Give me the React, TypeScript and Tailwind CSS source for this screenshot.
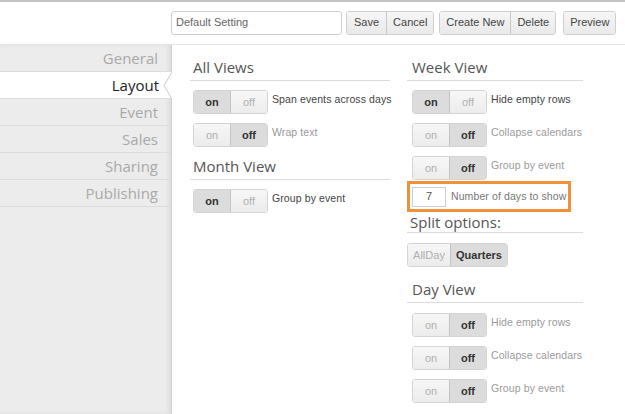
import React from 'react';

const font = { fontFamily: '"Open Sans", "Liberation Sans", sans-serif' };
const small = '[font-family:"Liberation_Sans",Arial,sans-serif] whitespace-nowrap';

const tabs = ['General', 'Layout', 'Event', 'Sales', 'Sharing', 'Publishing'];

function Toggle({ on, label }: { on: boolean; label: string }) {
  const seg = 'flex-1 flex items-center justify-center';
  return (
    <div className="flex items-center h-6 mb-[9px]">
      <div className={`flex shrink-0 w-[75px] h-6 rounded-[3px] border border-[#d4d4d4] overflow-hidden text-[11px] ${small}`}>
        <span className={`${seg} border-r border-[#c4c4c4] ${on ? 'bg-[#dcdcdc] font-bold text-[#333]' : 'bg-gradient-to-b from-[#f7f7f7] to-[#ececec] text-[#b0b0b0]'}`}>
          on
        </span>
        <span className={`${seg} ${!on ? 'bg-[#dcdcdc] font-bold text-[#333]' : 'bg-gradient-to-b from-[#f7f7f7] to-[#ececec] text-[#b0b0b0]'}`}>
          off
        </span>
      </div>
      <span className={`ml-[4px] -mt-[5px] text-[10.5px] tracking-[0.1px] ${small} ${on ? 'text-[#444]' : 'text-[#9a9a9a]'}`}>{label}</span>
    </div>
  );
}

function Heading({ children, className = '' }: { children: React.ReactNode; className?: string }) {
  return (
    <div className={`h-6 border-b border-[#dcdcdc] text-[15px] leading-[20px] text-[#555] pl-[3px] whitespace-nowrap ${className}`}>{children}</div>
  );
}

function Btn({ children, className = '' }: { children: React.ReactNode; className?: string }) {
  return (
    <span className={`h-full flex items-center px-[6px] bg-gradient-to-b from-[#f6f6f6] to-[#e9e9e9] text-[11px] text-[#444] ${small} ${className}`}>
      {children}
    </span>
  );
}

export default function App() {
  return (
    <div className="w-[625px] h-[414px] bg-white overflow-hidden flex flex-col" style={font}>
      <div className="h-[45px] shrink-0 border-t-2 border-[#c4c4c4] border-b border-b-[#e4e4e4] flex items-center pl-[171px] pb-[1px]">
        <div className={`w-[171px] h-6 border border-[#cfcfcf] rounded-[3px] flex items-center pl-[4px] text-[11px] text-[#666] ${small}`}>
          Default Setting
        </div>
        <div className="ml-[4px] h-6 flex border border-[#cfcfcf] rounded-[3px] overflow-hidden">
          <Btn className="border-r border-[#c8c8c8] px-[7px]">Save</Btn>
          <Btn>Cancel</Btn>
        </div>
        <div className="ml-[5px] h-6 flex border border-[#cfcfcf] rounded-[3px] overflow-hidden">
          <Btn className="border-r border-[#c8c8c8]">Create New</Btn>
          <Btn>Delete</Btn>
        </div>
        <div className="ml-[7px] h-6 flex border border-[#cfcfcf] rounded-[3px] overflow-hidden">
          <Btn>Preview</Btn>
        </div>
      </div>

      <div className="flex flex-1">
        <div className="w-[172px] shrink-0 bg-[#ececec] border-r border-[#cfcfcf] shadow-[inset_-3px_0_4px_rgba(0,0,0,0.06)]">
          {tabs.map((t) => {
            const active = t === 'Layout';
            return (
              <div
                key={t}
                className={`relative h-[27px] flex items-center justify-end pr-[13px] text-[15px] border-b border-[#dcdcdc] ${
                  active ? 'bg-white text-[#222] -mr-px' : 'text-[#a9a9a9]'
                }`}
              >
                {t}
                {active && (
                  <svg className="absolute right-0 top-0" width="9" height="27" viewBox="0 0 9 27">
                    <polyline points="9,0 1,13.5 9,27" fill="none" stroke="#c8c8c8" strokeWidth="1" />
                  </svg>
                )}
              </div>
            );
          })}
        </div>

        <div className="flex pl-[18px] pt-[12px]">
          <div className="w-[200px]">
            <Heading>All Views</Heading>
            <div className="pl-[3px] pt-[9px]">
              <Toggle on label="Span events across days" />
              <Toggle on={false} label="Wrap text" />
            </div>
            <Heading className="mt-[2px]">Month View</Heading>
            <div className="pl-[3px] pt-[9px]">
              <Toggle on label="Group by event" />
            </div>
          </div>

          <div className="w-[176px] ml-[17px]">
            <Heading className="pl-[5px]">Week View</Heading>
            <div className="pl-[5px] pt-[9px]">
              <Toggle on label="Hide empty rows" />
              <Toggle on={false} label="Collapse calendars" />
              <Toggle on={false} label="Group by event" />
            </div>
            <div className="w-[164px] h-[31px] -mt-[8px] border-[3px] border-[#f0913a] flex items-center pl-[2px]">
              <div className={`w-[34px] h-[20px] border border-[#cfcfcf] flex items-center justify-center text-[11px] text-[#555] ${small}`}>7</div>
              <span className={`ml-[5px] text-[10.5px] tracking-[0.1px] text-[#777] ${small}`}>Number of days to show</span>
            </div>
            <Heading className="h-[21px] leading-[16px] pl-[2px]">Split options:</Heading>
            <div className={`mt-[10px] w-[101px] h-6 flex border border-[#d4d4d4] rounded-[3px] overflow-hidden text-[11px] ${small}`}>
              <span className="w-[43px] flex items-center justify-center bg-gradient-to-b from-[#f7f7f7] to-[#ececec] text-[#b0b0b0] border-r border-[#c4c4c4]">AllDay</span>
              <span className="flex-1 flex items-center justify-center bg-[#dcdcdc] font-bold text-[#333]">Quarters</span>
            </div>
            <Heading className="mt-[12px] pl-[5px]">Day View</Heading>
            <div className="pl-[5px] pt-[10px]">
              <Toggle on={false} label="Hide empty rows" />
              <Toggle on={false} label="Collapse calendars" />
              <Toggle on={false} label="Group by event" />
            </div>
          </div>
        </div>
      </div>
    </div>
  );
}
